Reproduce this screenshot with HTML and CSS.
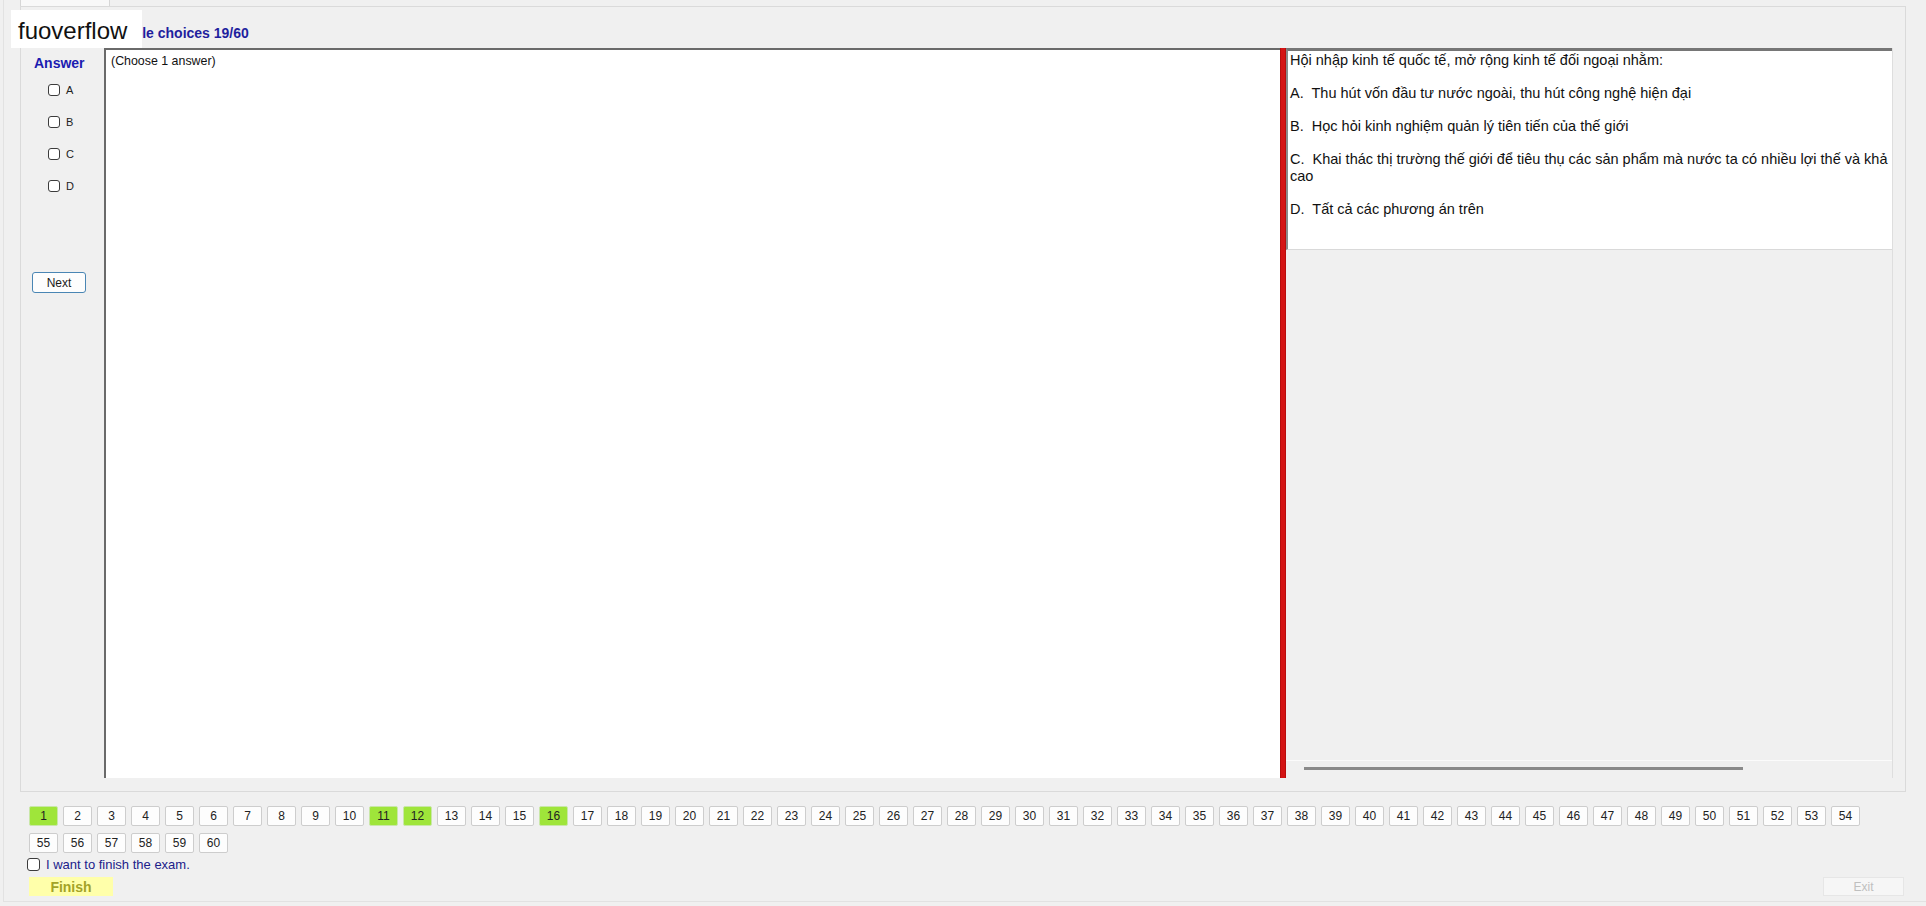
FILE: index.html
```html
<!DOCTYPE html>
<html>
<head>
<meta charset="utf-8">
<title>Multiple choices 19/60</title>
<link rel="stylesheet" href="styles.css">
</head>
<body>
<div class="app">
  <div class="brand">fuoverflow</div>
  <div class="tabstrip"><div class="tab"></div></div>
  <div class="tabpage">
    <div class="caption">Multiple choices 19/60</div>
    <div class="exam">
      <div class="answer-col">
        <div class="answer-title">Answer</div>
        <label class="option"><input type="checkbox"> A</label>
        <label class="option"><input type="checkbox"> B</label>
        <label class="option"><input type="checkbox"> C</label>
        <label class="option"><input type="checkbox"> D</label>
        <button class="btn-next">Next</button>
      </div>
      <div class="stem">(Choose 1 answer)</div>
      <div class="splitter"></div>
      <div class="question-pane">
        <div class="question">
          <p>Hội nhập kinh tế quốc tế, mở rộng kinh tế đối ngoại nhằm:</p>
          <p>A.&nbsp; Thu hút vốn đầu tư nước ngoài, thu hút công nghệ hiện đại</p>
          <p>B.&nbsp; Học hỏi kinh nghiệm quản lý tiên tiến của thế giới</p>
          <p>C.&nbsp; Khai thác thị trường thế giới để tiêu thụ các sản phẩm mà nước ta có nhiều lợi thế và khả<br>cao</p>
          <p>D.&nbsp; Tất cả các phương án trên</p>
        </div>
        <div class="hscroll"><span class="thumb"></span></div>
      </div>
    </div>
  </div>

  <div class="nav">
    <button class="num done">1</button><button class="num">2</button><button class="num">3</button><button class="num">4</button><button class="num">5</button><button class="num">6</button><button class="num">7</button><button class="num">8</button><button class="num">9</button><button class="num">10</button>
    <button class="num done">11</button><button class="num done">12</button><button class="num">13</button><button class="num">14</button><button class="num">15</button><button class="num done">16</button><button class="num">17</button><button class="num">18</button><button class="num">19</button><button class="num">20</button>
    <button class="num">21</button><button class="num">22</button><button class="num">23</button><button class="num">24</button><button class="num">25</button><button class="num">26</button><button class="num">27</button><button class="num">28</button><button class="num">29</button><button class="num">30</button>
    <button class="num">31</button><button class="num">32</button><button class="num">33</button><button class="num">34</button><button class="num">35</button><button class="num">36</button><button class="num">37</button><button class="num">38</button><button class="num">39</button><button class="num">40</button>
    <button class="num">41</button><button class="num">42</button><button class="num">43</button><button class="num">44</button><button class="num">45</button><button class="num">46</button><button class="num">47</button><button class="num">48</button><button class="num">49</button><button class="num">50</button>
    <button class="num">51</button><button class="num">52</button><button class="num">53</button><button class="num">54</button><button class="num">55</button><button class="num">56</button><button class="num">57</button><button class="num">58</button><button class="num">59</button><button class="num">60</button>
  </div>

  <label class="confirm"><input type="checkbox"> I want to finish the exam.</label>

  <div class="actions">
    <button class="btn-finish">Finish</button>
    <button class="btn-exit" disabled>Exit</button>
  </div>
</div>
</body>
</html>
```

FILE: styles.css
```css
body {
  margin: 0;
  width: 1926px;
  height: 906px;
  overflow: hidden;
  background: #f0f0f0;
  font-family: "Liberation Sans", Arial, sans-serif;
  color: #1e1e1e;
}
*, *:before, *:after { box-sizing: border-box; }
button { font-family: inherit; }

.app {
  position: relative;
  margin-left: 3px;
  height: 902px;
  border-left: 1px solid #e2e2e2;
  border-bottom: 1px solid #e2e2e2;
}

/* site watermark sitting over the caption */
.brand {
  position: absolute;
  left: 7px;
  top: 10px;
  width: 131px;
  height: 38px;
  padding: 3px 0 0 7px;
  background: #fff;
  font-size: 24px;
  line-height: 35px;
  color: #111;
}

.tabstrip { height: 6px; padding-left: 16px; }
.tab {
  width: 90px;
  height: 6px;
  background: #f8f8f8;
  border: 1px solid #d6d6d6;
  border-top: none;
  border-bottom: none;
}

.tabpage {
  margin-left: 16px;
  width: 1886px;
  height: 786px;
  border: 1px solid #dadada;
  background: #f0f0f0;
}
.caption {
  height: 41px;
  padding: 18px 0 0 80px;
  font-size: 14px;
  line-height: 16px;
  font-weight: bold;
  color: #1f1f9e;
}

.exam { display: flex; height: 730px; }

.answer-col { width: 83px; }
.answer-title {
  padding: 7px 0 0 13px;
  font-size: 14px;
  line-height: 16px;
  font-weight: bold;
  color: #1b1bb0;
}
.option {
  display: flex;
  align-items: center;
  height: 32px;
  padding-left: 27px;
  font-size: 11px;
  color: #222;
}
.answer-title + .option { margin-top: 3px; }
.option input { margin: 0 6px 0 0; }

input[type=checkbox] {
  appearance: none;
  -webkit-appearance: none;
  width: 12px;
  height: 12px;
  border: 1px solid #3c3c3c;
  border-radius: 3px;
  background: #fff;
}

.btn-next {
  display: block;
  margin: 70px 0 0 11px;
  width: 54px;
  height: 21px;
  padding: 0;
  background: #fdfdfd;
  border: 1px solid #4a86b4;
  border-radius: 3px;
  font-size: 12px;
  color: #1a1a1a;
}

.stem {
  width: 1176px;
  padding: 4px 0 0 5px;
  background: #fff;
  border-left: 2px solid #6a6a6a;
  border-top: 2px solid #6a6a6a;
  font-size: 12.4px;
  line-height: 14px;
  color: #111;
}

.splitter {
  width: 6px;
  background: #d41414;
  border-left: 1px solid #b80d0d;
  border-right: 1px solid #b80d0d;
}

.question-pane {
  display: flex;
  flex-direction: column;
  width: 607px;
  border-right: 1px solid #dedede;
}
.question {
  height: 202px;
  overflow: hidden;
  padding: 1px 0 0 2px;
  background: #fff;
  border-top: 3px solid #767676;
  border-left: 2px solid #8a8a8a;
  border-bottom: 1px solid #d9d9d9;
  font-size: 14.5px;
  line-height: 17px;
  color: #111;
}
.question p { margin: 0 0 16px; white-space: nowrap; }
.hscroll {
  margin-top: auto;
  height: 18px;
  padding: 6px 0 0 18px;
  border-top: 1px solid #fbfbfb;
}
.thumb {
  display: block;
  width: 439px;
  height: 3px;
  background: #8a8a8a;
}

/* 54 buttons per row, the rest wrap */
.nav {
  display: flex;
  flex-wrap: wrap;
  gap: 7px 5px;
  width: 1840px;
  margin: 14px 0 0 25px;
}
.num {
  width: 29px;
  height: 20px;
  padding: 0;
  background: #fdfdfd;
  border: 1px solid #cdcdcd;
  border-radius: 2px;
  font-size: 12px;
  color: #222;
}
.num.done { background: #9fe53a; border-color: #c9e7a8; }

.confirm {
  display: flex;
  align-items: center;
  height: 14px;
  margin: 4px 0 0 23px;
  font-size: 13px;
  color: #20208a;
}
.confirm input { width: 13px; height: 13px; margin: 0 6px 0 0; }

.actions {
  display: flex;
  justify-content: space-between;
  width: 1875px;
  margin: 6px 0 0 25px;
}
.btn-finish {
  width: 84px;
  height: 19px;
  padding: 0;
  background: #ffffaa;
  border: none;
  font-size: 14px;
  font-weight: bold;
  color: #a3a328;
}
.btn-exit {
  width: 81px;
  height: 19px;
  padding: 0;
  background: #f6f6f6;
  border: 1px solid #e6e6e6;
  font-size: 12px;
  color: #bfbfbf;
}
```
